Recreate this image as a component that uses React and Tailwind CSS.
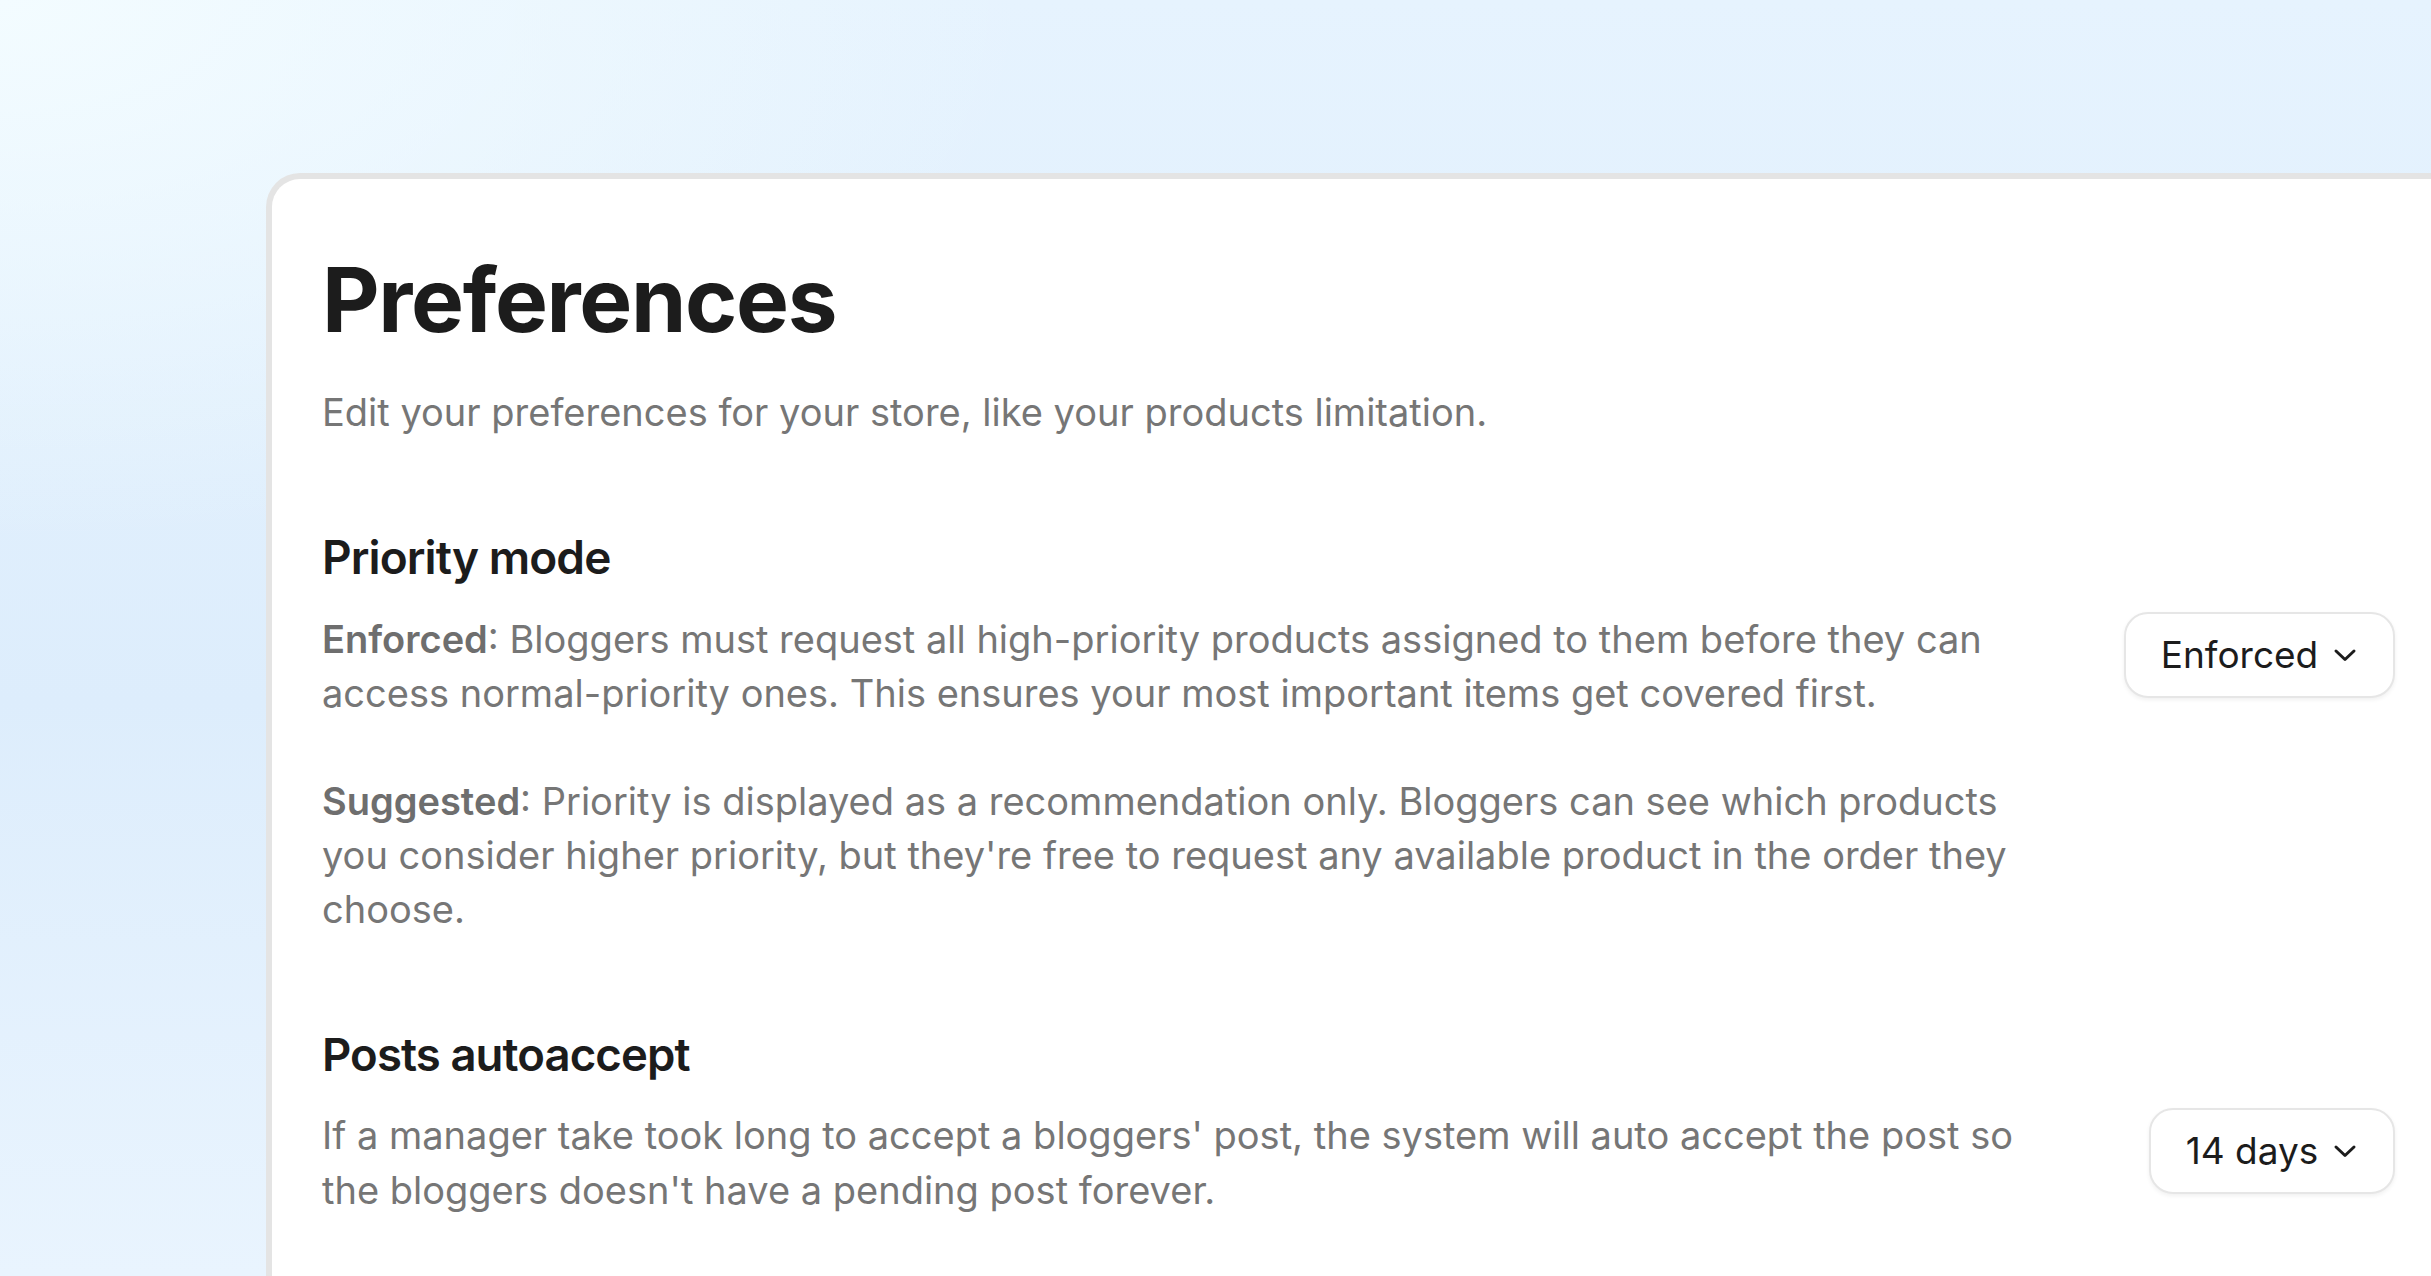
import React from "react";

function Chevron() {
  return (
    <svg width="26" height="26" viewBox="0 0 26 26" fill="none" stroke="#1c1c1c" strokeWidth="3" strokeLinecap="round" strokeLinejoin="round" className="shrink-0">
      <path d="M4 9l9 8.5 9-8.5" />
    </svg>
  );
}

function SelectButton({ label, width }) {
  return (
    <button className={`flex h-[86px] shrink-0 items-center justify-center gap-[14px] rounded-[24px] border-2 border-[#e6e6e6] bg-white text-[37px] text-[#1c1c1c] shadow-[0_2px_4px_rgba(0,0,0,0.06)] ${width}`}>
      <span>{label}</span>
      <Chevron />
    </button>
  );
}

export default function App() {
  return (
    <div
      className="h-[1276px] w-[2431px] overflow-hidden bg-[radial-gradient(ellipse_at_0%_0%,#f3fcff_0%,rgba(243,252,255,0)_30%),linear-gradient(180deg,#e6f3fe_0%,#ddedfc_55%,#e9f4fe_100%)] pl-[266px] pt-[173px]"
      style={{ fontFamily: "Inter, 'Noto Sans', sans-serif" }}
    >
      <div className="w-[2200px] rounded-tl-[34px] border-l-[6px] border-t-[6px] border-[#e4e4e4] bg-white pl-[50px] pr-[71px] pt-[76px] pb-[200px]">
        <h1 className="text-[89px] font-bold leading-[89px] tracking-[-0.015em] text-[#1c1c1c]">Preferences</h1>
        <p className="mt-[41px] text-[38px] leading-[54px] text-[#767676]">
          Edit your preferences for your store, like your products limitation.
        </p>

        <section className="mt-[91px]">
          <h2 className="text-[46px] font-semibold leading-[54px] tracking-[-0.02em] text-[#1c1c1c]">Priority mode</h2>
          <div className="mt-[28px] flex items-start justify-between">
            <div className="w-[1710px] text-[38px] leading-[54px] text-[#767676]">
              <p>
                <span className="font-semibold text-[#6e6e6e]">Enforced</span>: Bloggers must request all high-priority products assigned to them before they can access normal-priority ones. This ensures your most important items get covered first.
              </p>
              <p className="mt-[54px]">
                <span className="font-semibold text-[#6e6e6e]">Suggested</span>: Priority is displayed as a recommendation only. Bloggers can see which products you consider higher priority, but they're free to request any available product in the order they choose.
              </p>
            </div>
            <SelectButton label="Enforced" width="w-[271px]" />
          </div>
        </section>

        <section className="mt-[92px]">
          <h2 className="text-[45.5px] font-semibold leading-[54px] tracking-[-0.02em] text-[#1c1c1c]">Posts autoaccept</h2>
          <div className="mt-[26px] flex items-start justify-between">
            <div className="w-[1710px] text-[38px] leading-[55px] text-[#767676]">
              <p>
                If a manager take took long to accept a bloggers' post, the system will auto accept the post so the bloggers doesn't have a pending post forever.
              </p>
            </div>
            <SelectButton label="14 days" width="w-[246px]" />
          </div>
        </section>
      </div>
    </div>
  );
}
